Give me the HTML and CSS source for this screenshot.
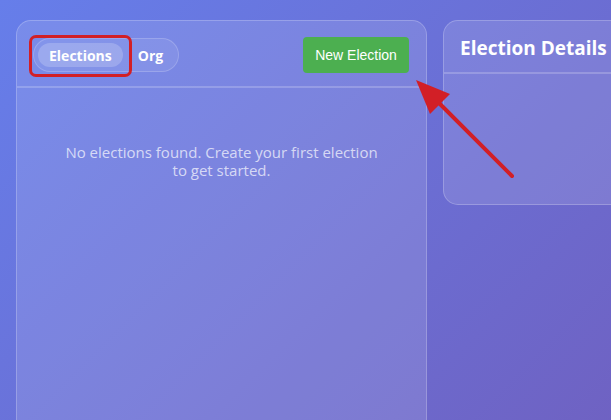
FILE: index.html
```html
<!DOCTYPE html>
<html lang="en">
<head>
    <meta charset="UTF-8">
    <meta name="viewport" content="width=device-width, initial-scale=1.0">
    <title>Elections</title>
    <link rel="stylesheet" href="styles.css">
</head>
<body>
    <div class="layout">
        <section class="card card-list">
            <div class="card-header">
                <div class="tabs">
                    <button class="tab active">Elections</button>
                    <button class="tab">Org</button>
                </div>
                <button class="btn-new">New Election</button>
            </div>
            <div class="empty">
                No elections found. Create your first election to get started.
            </div>
        </section>

        <section class="card card-details">
            <div class="card-header details-header">
                <h2>Election Details</h2>
            </div>
            <div class="details-body"></div>
        </section>
    </div>

    <!-- annotation overlay -->
    <div class="mark-box"></div>
    <svg class="mark-arrow" width="611" height="420" viewBox="0 0 611 420" xmlns="http://www.w3.org/2000/svg">
        <line x1="512" y1="176" x2="436" y2="100" stroke="#d21f26" stroke-width="4" stroke-linecap="round"/>
        <polygon points="416,80 450,94 430,114" fill="#d21f26"/>
    </svg>
</body>
</html>
```

FILE: styles.css
```css
/* Page */
* {
    box-sizing: border-box;
}
html, body {
    margin: 0;
    height: 100%;
    overflow: hidden;
}
body {
    font-family: "Open Sans", "Noto Sans", sans-serif;
    background: linear-gradient(135deg, #667eea 0%, #764ba2 100%);
    background-size: 1100px 780px;
    background-repeat: no-repeat;
    background-color: #6e64c6;
    color: #fff;
    position: relative;
}

.layout {
    display: flex;
    align-items: flex-start;
    gap: 16px;
    padding: 20px 16px;
    width: 1100px;
}

/* Glass cards */
.card {
    background: rgba(255, 255, 255, 0.12);
    border: 1px solid rgba(255, 255, 255, 0.22);
    border-radius: 15px;
}
.card-list {
    width: 411px;
    height: 520px;
    flex-shrink: 0;
}
.card-details {
    width: 420px;
    flex-shrink: 0;
}

.card-header {
    display: flex;
    align-items: center;
    justify-content: space-between;
    padding: 16px 16px 13px 16px;
    border-bottom: 2px solid rgba(255, 255, 255, 0.2);
}

/* Tabs pill */
.tabs {
    display: flex;
    gap: 4px;
    padding: 4px;
    background: rgba(255, 255, 255, 0.08);
    border: 1px solid rgba(255, 255, 255, 0.18);
    border-radius: 20px;
}
.tab {
    font-family: inherit;
    font-size: 14px;
    font-weight: 700;
    color: #fff;
    background: none;
    border: none;
    border-radius: 12px;
    padding: 0 11px;
    height: 24px;
    cursor: pointer;
}
.tab.active {
    background: rgba(255, 255, 255, 0.2);
}

.btn-new {
    font-family: "Liberation Sans", Arial, sans-serif;
    font-size: 14px;
    color: #fff;
    background: #4caf50;
    border: none;
    border-radius: 4px;
    width: 106px;
    height: 36px;
    margin-right: 1px;
    cursor: pointer;
}

.empty {
    text-align: center;
    font-size: 15px;
    line-height: 18px;
    color: rgba(255, 255, 255, 0.7);
    padding: 55px 44px 0 44px;
}

/* Details card */
.details-header {
    padding: 15px 16px 12px 16px;
}
.details-header h2 {
    margin: 0;
    font-size: 19px;
    font-weight: 700;
    line-height: 24px;
}
.details-body {
    height: 130px;
}

/* Annotation marks */
.mark-box {
    position: absolute;
    left: 29px;
    top: 35px;
    width: 103px;
    height: 42px;
    border: 3px solid #d21f26;
    border-radius: 7px;
}
.mark-arrow {
    position: absolute;
    left: 0;
    top: 0;
}
```
